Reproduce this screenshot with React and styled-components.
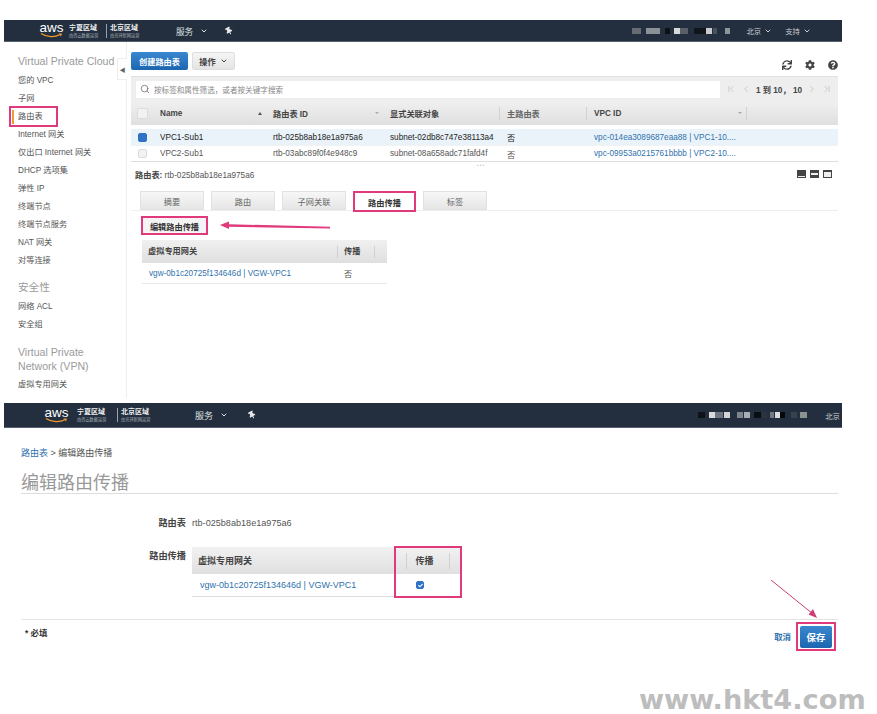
import React from "react"
import styled, { createGlobalStyle } from "styled-components"
import { FaSync, FaCog, FaQuestionCircle, FaThumbtack, FaCheck } from "react-icons/fa"
import {
  Search,
  ChevronDown,
  ChevronFirst,
  ChevronLast,
  ChevronLeft,
  ChevronRight,
} from "lucide-react"

const PINK = "#e0397c"
const LINK = "#2f72ad"

const GlobalStyle = createGlobalStyle`
  html, body {
    margin: 0;
    padding: 0;
    background: #fff;
  }
  body {
    font-family: "Liberation Sans", "Noto Sans CJK SC", sans-serif;
    color: #444;
  }
`

const Page = styled.div`
  position: relative;
  width: 877px;
  height: 714px;
  overflow: hidden;
  padding: 20px 35px 0 4px;
  box-sizing: border-box;
`

const Nav = styled.header`
  display: flex;
  align-items: center;
  height: ${p => p.$height}px;
  padding-left: ${p => p.$left}px;
  background: #232f3e;
  color: #e6e8ea;
  box-sizing: border-box;
  border-bottom: 1px solid #56616d;
`

const Logo = styled.div`
  display: flex;
  flex-direction: column;
  align-items: center;
  width: 23px;
  margin-right: ${p => p.$gap}px;
`

const LogoText = styled.span`
  font-size: 13.5px;
  line-height: 10px;
  color: #fff;
`

const Region = styled.div`
  display: flex;
  flex-direction: column;
  gap: 1px;
  width: ${p => p.$width}px;
  padding-left: ${p => (p.$divided ? 3 : 0)}px;
  border-left: ${p => (p.$divided ? "1px solid #9aa2aa" : "none")};
`

const RegionName = styled.span`
  font-size: 7px;
  line-height: 8px;
  font-weight: bold;
  color: #f2f2f2;
`

const RegionNote = styled.span`
  font-size: 4.2px;
  line-height: 5px;
  color: #aab0b6;
  white-space: nowrap;
`

const Services = styled.span`
  display: flex;
  align-items: center;
  gap: 7px;
  margin-left: ${p => p.$gap}px;
  font-size: ${p => p.$size}px;
  color: #dfe1e3;
`

const Pin = styled(FaThumbtack)`
  margin-left: ${p => p.$gap}px;
  color: #e8e8e8;
  font-size: 8px;
  transform: rotate(-30deg);
`

const NavRight = styled.div`
  display: flex;
  align-items: center;
  margin-left: auto;
  margin-right: ${p => p.$right}px;
  font-size: 7.4px;
  color: #c9cdd1;
`

const Mosaic = styled.svg`
  display: block;
  margin-right: ${p => p.$gap}px;
`

const NavMenu = styled.span`
  display: flex;
  align-items: center;
  gap: 3px;
  margin-left: ${p => p.$gap || 0}px;
`

const Body = styled.div`
  display: flex;
  height: 356px;
`

const Sidebar = styled.nav`
  width: 123px;
  flex: none;
  padding: 10px 0 0 14px;
  box-sizing: border-box;
  border-right: 1px solid #eee;
`

const SideTitle = styled.div`
  font-size: 10.6px;
  line-height: ${p => p.$line || 18}px;
  color: #9a9a9a;
  white-space: nowrap;
  margin-top: ${p => p.$top || 0}px;
  margin-bottom: ${p => p.$bottom || 0}px;
`

const SideItem = styled.div`
  position: relative;
  font-size: 8.2px;
  line-height: 18px;
  color: #555;
  white-space: nowrap;

  ${p =>
    p.$active &&
    `
    &::before {
      content: "";
      position: absolute;
      left: -6px;
      top: 2px;
      width: 2px;
      height: 14px;
      background: #f19a38;
    }
    &::after {
      content: "";
      position: absolute;
      left: -9px;
      top: -2px;
      width: 49px;
      height: 21px;
      border: 2px solid ${PINK};
      box-sizing: border-box;
    }
  `}
`

const Main = styled.main`
  position: relative;
  flex: 1;
  min-width: 0;
  padding: 10px 4px 0;
`

const CollapseTab = styled.div`
  position: absolute;
  left: -10px;
  top: 16px;
  width: 10px;
  height: 22px;
  display: flex;
  align-items: center;
  justify-content: center;
  background: #fff;
  border: 1px solid #eee;
  border-right: none;
  box-sizing: border-box;
  color: #666;
  font-size: 6px;
`

const Toolbar = styled.div`
  display: flex;
  align-items: center;
  gap: 4px;
  height: 18px;
`

const PrimaryButton = styled.button`
  height: ${p => p.$height || 18}px;
  width: ${p => p.$width}px;
  padding: 0;
  border: none;
  border-radius: 2px;
  background: linear-gradient(#3a87cf, #1c66b0);
  color: #fff;
  font: bold ${p => p.$font || 8.2}px "Liberation Sans", "Noto Sans CJK SC", sans-serif;
`

const GrayButton = styled.button`
  display: flex;
  align-items: center;
  justify-content: center;
  gap: 4px;
  width: 43px;
  height: 18px;
  padding: 0;
  border: 1px solid #ddd;
  border-radius: 2px;
  background: linear-gradient(#f5f5f5, #e4e4e4);
  color: #444;
  font: bold 8.2px "Liberation Sans", "Noto Sans CJK SC", sans-serif;
`

const ToolIcons = styled.div`
  display: flex;
  align-items: center;
  gap: 13px;
  margin-left: auto;
  padding-top: 8px;
  color: #444;
  font-size: 10px;
`

const FilterBar = styled.div`
  display: flex;
  align-items: center;
  height: 25px;
  margin-top: 6px;
  padding: 0 0 0 5px;
  background: #eee;
  border-top: 1px solid #e2e2e2;
  box-sizing: border-box;
`

const FilterInput = styled.div`
  display: flex;
  align-items: center;
  gap: 4px;
  width: 584px;
  height: 17px;
  padding-left: 4px;
  box-sizing: border-box;
  background: #fff;
  color: #888;
  font-size: 7.6px;
`

const Pager = styled.div`
  display: flex;
  align-items: center;
  justify-content: center;
  gap: 5px;
  flex: 1;
  color: #444;
  font-size: 8.2px;
  font-weight: bold;
  white-space: nowrap;

  svg {
    color: #c4c4c4;
  }
`

const GRID = "22px 113px 117px 117px 87px 160px 1fr"

const TableHead = styled.div`
  display: grid;
  grid-template-columns: ${GRID};
  align-items: center;
  height: 24px;
  background: linear-gradient(#f0f0f0, #dfdfdf);
  font-size: 8.2px;
  color: #444;
  font-weight: bold;
`

const HeadCell = styled.div`
  display: flex;
  align-items: center;
  justify-content: space-between;
  height: 13px;
  padding: 0 4px 0 7px;
  border-right: ${p => (p.$sep ? "1px solid #d2d2d2" : "none")};
  color: ${p => (p.$soft ? "#666" : "#444")};
  white-space: nowrap;
`

const SortMark = styled.span`
  width: 0;
  height: 0;
  border-left: 2px solid transparent;
  border-right: 2px solid transparent;
  border-bottom: ${p => (p.$on ? "3px solid #555" : "none")};
  border-top: ${p => (p.$on ? "none" : "2px solid #aaa")};
`

const TableRow = styled.div`
  display: grid;
  grid-template-columns: ${GRID};
  align-items: center;
  height: ${p => (p.$selected ? 17 : 16)}px;
  margin-top: ${p => (p.$selected ? 4 : 0)}px;
  background: ${p => (p.$selected ? "#ebf3fa" : "#fff")};
  border-bottom: 1px solid ${p => (p.$selected ? "#f2f2f2" : "#ddd")};
  box-sizing: border-box;
  font-size: 8.2px;
  color: ${p => (p.$selected ? "#222" : "#555")};
`

const Cell = styled.div`
  padding-left: 7px;
  white-space: nowrap;
  overflow: hidden;
`

const LinkText = styled.span`
  color: ${LINK};
  font-size: ${p => p.$size || 8.2}px;
  white-space: nowrap;
`

const CheckCell = styled.div`
  display: flex;
  justify-content: center;
`

const Check = styled.span`
  display: flex;
  align-items: center;
  justify-content: center;
  width: ${p => p.$size || 9}px;
  height: ${p => p.$size || 9}px;
  border-radius: 2px;
  box-sizing: border-box;
  background: ${p => (p.$on ? "#2f72c6" : "#f2f2f2")};
  border: 1px solid ${p => (p.$on ? "#2f72c6" : "#dcdcdc")};
  color: #fff;
  font-size: 5px;
`

const DetailBar = styled.div`
  position: relative;
  display: flex;
  align-items: center;
  justify-content: space-between;
  height: 24px;
  padding: 0 6px 0 4px;
  font-size: 8.2px;
  color: #555;

  b {
    color: #444;
  }
`

const DragDots = styled.span`
  position: absolute;
  left: 346px;
  top: 1px;
  font-size: 5px;
  line-height: 5px;
  letter-spacing: 1px;
  color: #ccc;
`

const LayoutIcons = styled.div`
  display: flex;
  gap: 4px;
`

const Tabs = styled.div`
  display: flex;
  gap: 7px;
  height: 19px;
  margin-top: 5px;
  padding-left: 9px;
  border-bottom: 1px solid #eee;
`

const Tab = styled.div`
  display: flex;
  align-items: center;
  justify-content: center;
  width: ${p => (p.$active ? 63 : 64)}px;
  height: ${p => (p.$active ? 21 : 19)}px;
  box-sizing: border-box;
  border: ${p => (p.$active ? `2px solid ${PINK}` : "1px solid #e2e2e2")};
  background: ${p => (p.$active ? "#fff" : "linear-gradient(#f7f7f7, #e6e6e6)")};
  font-size: 8.2px;
  font-weight: ${p => (p.$active ? "bold" : "normal")};
  color: ${p => (p.$active ? "#333" : "#666")};
`

const Pane = styled.div`
  position: relative;
  padding: 5px 0 0 10px;
`

const EditButton = styled.div`
  display: flex;
  align-items: center;
  justify-content: center;
  width: 67px;
  height: 19px;
  margin-bottom: 5px;
  box-sizing: border-box;
  border: 2px solid ${PINK};
  background: #f4f4f4;
  color: #333;
  font-size: 8.2px;
  font-weight: bold;
`

const Annotation = styled.svg`
  position: absolute;
  left: ${p => p.$x}px;
  top: ${p => p.$y}px;
  pointer-events: none;
`

const SubTable = styled.div`
  width: 245px;
  margin-left: 1px;
`

const SUB_GRID = "196px 37px 12px"

const SubHead = styled.div`
  display: grid;
  grid-template-columns: ${SUB_GRID};
  align-items: center;
  height: 23px;
  background: linear-gradient(#f0f0f0, #dfdfdf);
  font-size: 8.2px;
  font-weight: bold;
  color: #444;
`

const SubHeadCell = styled.div`
  height: 12px;
  line-height: 12px;
  padding-left: 6px;
  border-right: ${p => (p.$sep ? "1px solid #d0d0d0" : "none")};
`

const SubRow = styled.div`
  display: grid;
  grid-template-columns: ${SUB_GRID};
  align-items: center;
  height: 21px;
  box-sizing: border-box;
  border-bottom: 1px solid #e8e8e8;
  font-size: 8.2px;
  color: #555;
`

const SubCell = styled.div`
  padding-left: ${p => p.$left}px;
  white-space: nowrap;
`

const Shot = styled.section`
  position: relative;
  margin-top: 5px;
`

const Content = styled.div`
  padding: 17px 0 0 17px;
  margin-right: 4px;
`

const Crumbs = styled.div`
  font-size: 9px;
  line-height: 16px;
  color: #555;
`

const CrumbLink = styled.span`
  color: ${LINK};
`

const PageTitle = styled.h1`
  margin: 8px 0 0;
  height: 25px;
  font-size: 18px;
  line-height: 28px;
  font-weight: normal;
  color: #999;
  border-bottom: 1px solid #ddd;
  box-sizing: border-box;
`

const FormRow = styled.div`
  display: flex;
  align-items: ${p => p.$align || "center"};
  gap: 6px;
  height: ${p => p.$height}px;
  margin-top: ${p => p.$top}px;
  font-size: 9.1px;
  line-height: 12px;
  color: #555;
`

const FormLabel = styled.div`
  width: 165px;
  flex: none;
  text-align: right;
  font-weight: bold;
  color: #444;
  font-size: 9.2px;
  padding-top: ${p => p.$pad || 0}px;
`

const PropTable = styled.div`
  display: flex;
  width: 270px;
`

const GatewayCol = styled.div`
  width: 202px;
  flex: none;
  margin-top: 1px;
`

const FramedCol = styled.div`
  width: 68px;
  flex: none;
  box-sizing: border-box;
  border: 2px solid ${PINK};
`

const PropHead = styled.div`
  display: flex;
  align-items: center;
  justify-content: ${p => (p.$center ? "center" : "flex-start")};
  height: ${p => p.$height}px;
  padding-left: ${p => (p.$center ? 0 : 6)}px;
  background: linear-gradient(#f1f1f1, #e0e0e0);
  font-weight: bold;
  color: #444;
  font-size: 9px;
`

const HeadLabel = styled.span`
  padding: 2px 15px 2px 8px;
  border-left: 1px solid #d0d0d0;
  border-right: 1px solid #d0d0d0;
`

const GatewayCell = styled.div`
  display: flex;
  align-items: center;
  height: 23px;
  padding-left: 8px;
  box-sizing: border-box;
  border-bottom: 1px solid #ddd;
`

const ToggleCell = styled.div`
  display: flex;
  align-items: center;
  height: 22px;
  padding-left: 20px;
  box-sizing: border-box;
`

const FormFooter = styled.div`
  display: flex;
  align-items: flex-start;
  height: 40px;
  margin-top: 21px;
  padding: 0 2px 0 4px;
  border-top: 1px solid #e4e4e4;
`

const Required = styled.span`
  margin-top: 7px;
  font-size: 8.4px;
  line-height: 12px;
  font-weight: bold;
  color: #333;
`

const Cancel = styled.span`
  margin: 11px 5px 0 auto;
  font-size: 8.4px;
  line-height: 12px;
  font-weight: bold;
  color: ${LINK};
`

const SaveFrame = styled.div`
  display: flex;
  align-items: center;
  justify-content: center;
  width: 40px;
  height: 29px;
  margin-top: 2px;
  box-sizing: border-box;
  border: 2px solid ${PINK};
  background: #fff;
`

const Watermark = styled.div`
  position: absolute;
  left: 639px;
  top: 686px;
  font: bold 27.2px/28px "DejaVu Sans", sans-serif;
  color: #bdbdbd;
  white-space: nowrap;
`

const MOSAIC_TOP = [
  [0, 9, "#676c72"],
  [14, 14, "#8c9197"],
  [33, 5, "#0d1116"],
  [42, 6, "#d8d8d8"],
  [48, 8, "#59606a"],
  [62, 12, "#10151b"],
  [74, 6, "#c8cacc"],
  [81, 4, "#49525c"],
  [93, 5, "#8b939b"],
]

const MOSAIC_BOTTOM = [
  [0, 7, "#0e1318"],
  [11, 6, "#d9dadc"],
  [17, 8, "#6f7680"],
  [26, 6, "#d4d5d8"],
  [39, 6, "#7d848c"],
  [46, 6, "#a8adb3"],
  [56, 7, "#0a0e12"],
  [64, 5, "#2a3440"],
  [72, 4, "#727982"],
  [77, 5, "#dcdde0"],
  [82, 5, "#050709"],
  [93, 6, "#37424e"],
  [102, 7, "#8b938f"],
]

const Redacted = ({ blocks, width, gap }) => (
  <Mosaic width={width} height="8" viewBox={`0 0 ${width} 8`} $gap={gap}>
    {blocks.map(([x, w, fill]) => (
      <rect key={x} x={x} y="1" width={w} height="6" fill={fill} />
    ))}
  </Mosaic>
)

const AwsBrand = ({ logoGap, firstWidth, secondWidth }) => (
  <>
    <Logo $gap={logoGap}>
      <LogoText>aws</LogoText>
      <svg width="23" height="5" viewBox="0 0 23 5">
        <path d="M1 0.5C7 4.5 15 4.5 20 1.5" fill="none" stroke="#f29b2e" strokeWidth="1.2" />
        <path d="M18.5 0.6L22 0.6L21 3.4Z" fill="#f29b2e" />
      </svg>
    </Logo>
    <Region $width={firstWidth}>
      <RegionName>宁夏区域</RegionName>
      <RegionNote>由西云数据运营</RegionNote>
    </Region>
    <Region $width={secondWidth} $divided>
      <RegionName>北京区域</RegionName>
      <RegionNote>由光环新网运营</RegionNote>
    </Region>
  </>
)

const Caret = () => <ChevronDown size={8} strokeWidth={3} />

const ResizeIcon = ({ band }) => (
  <svg width="9" height="8" viewBox="0 0 9 8">
    <rect width="9" height="8" fill="#444" />
    <rect x="1" y={band[0]} width="7" height={band[1]} fill="#eee" />
  </svg>
)

const RTB = "rtb-025b8ab18e1a975a6"
const VGW = "vgw-0b1c20725f134646d | VGW-VPC1"

const tabs = ["摘要", "路由", "子网关联", "路由传播", "标签"]

const topItems = [
  "您的 VPC",
  "子网",
  "路由表",
  "Internet 网关",
  "仅出口 Internet 网关",
  "DHCP 选项集",
  "弹性 IP",
  "终端节点",
  "终端节点服务",
  "NAT 网关",
  "对等连接",
]

const App = () => (
  <Page>
    <GlobalStyle />

    <Nav $height={22} $left={36}>
      <AwsBrand logoGap={6} firstWidth={37} secondWidth={36} />
      <Services $gap={30} $size={8.6}>
        服务 <Caret />
      </Services>
      <Pin $gap={17} />
      <NavRight $right={31}>
        <Redacted blocks={MOSAIC_TOP} width={98} gap={16} />
        <NavMenu>
          北京 <Caret />
        </NavMenu>
        <NavMenu $gap={13}>
          支持 <Caret />
        </NavMenu>
      </NavRight>
    </Nav>

    <Body>
      <Sidebar>
        <SideTitle $bottom={2}>Virtual Private Cloud</SideTitle>
        {topItems.map(item => (
          <SideItem key={item} $active={item === "路由表"}>
            {item}
          </SideItem>
        ))}
        <SideTitle $top={8} $bottom={2}>
          安全性
        </SideTitle>
        <SideItem>网络 ACL</SideItem>
        <SideItem>安全组</SideItem>
        <SideTitle $top={11} $bottom={3} $line={14}>
          Virtual Private
          <br />
          Network (VPN)
        </SideTitle>
        <SideItem>虚拟专用网关</SideItem>
      </Sidebar>

      <Main>
        <CollapseTab>◀</CollapseTab>
        <Toolbar>
          <PrimaryButton $width={57}>创建路由表</PrimaryButton>
          <GrayButton>
            操作 <Caret />
          </GrayButton>
          <ToolIcons>
            <FaSync />
            <FaCog />
            <FaQuestionCircle />
          </ToolIcons>
        </Toolbar>

        <FilterBar>
          <FilterInput>
            <Search size={10} color="#777" />
            按标签和属性筛选，或者按关键字搜索
          </FilterInput>
          <Pager>
            <ChevronFirst size={10} />
            <ChevronLeft size={10} />
            1 到 10， 10
            <ChevronRight size={10} />
            <ChevronLast size={10} />
          </Pager>
        </FilterBar>

        <TableHead>
          <CheckCell>
            <Check $size={11} />
          </CheckCell>
          <HeadCell>
            Name <SortMark $on />
          </HeadCell>
          <HeadCell>
            路由表 ID <SortMark />
          </HeadCell>
          <HeadCell $sep>显式关联对象</HeadCell>
          <HeadCell $sep $soft>
            主路由表
          </HeadCell>
          <HeadCell $sep>
            VPC ID <SortMark />
          </HeadCell>
        </TableHead>
        <TableRow $selected>
          <CheckCell>
            <Check $on />
          </CheckCell>
          <Cell>VPC1-Sub1</Cell>
          <Cell>{RTB}</Cell>
          <Cell>subnet-02db8c747e38113a4</Cell>
          <Cell>否</Cell>
          <Cell>
            <LinkText>vpc-014ea3089687eaa88 | VPC1-10....</LinkText>
          </Cell>
        </TableRow>
        <TableRow>
          <CheckCell>
            <Check />
          </CheckCell>
          <Cell>VPC2-Sub1</Cell>
          <Cell>rtb-03abc89f0f4e948c9</Cell>
          <Cell>subnet-08a658adc71fafd4f</Cell>
          <Cell>否</Cell>
          <Cell>
            <LinkText>vpc-09953a0215761bbbb | VPC2-10....</LinkText>
          </Cell>
        </TableRow>

        <DetailBar>
          <DragDots>•••</DragDots>
          <span>
            <b>路由表:</b> {RTB}
          </span>
          <LayoutIcons>
            <ResizeIcon band={[6, 1]} />
            <ResizeIcon band={[3, 2]} />
            <ResizeIcon band={[2, 5]} />
          </LayoutIcons>
        </DetailBar>

        <Tabs>
          {tabs.map(tab => (
            <Tab key={tab} $active={tab === "路由传播"}>
              {tab}
            </Tab>
          ))}
        </Tabs>

        <Pane>
          <Annotation $x={89} $y={10} width="112" height="10" viewBox="0 0 112 10">
            <path d="M0 4L9 0.5L9 3.2L110 5.8L110 7.4L9 5.8L9 8Z" fill={PINK} />
          </Annotation>
          <EditButton>编辑路由传播</EditButton>
          <SubTable>
            <SubHead>
              <SubHeadCell $sep>虚拟专用网关</SubHeadCell>
              <SubHeadCell $sep>传播</SubHeadCell>
            </SubHead>
            <SubRow>
              <SubCell $left={7}>
                <LinkText>{VGW}</LinkText>
              </SubCell>
              <SubCell $left={6}>否</SubCell>
            </SubRow>
          </SubTable>
        </Pane>
      </Main>
    </Body>

    <Shot>
      <Nav $height={25} $left={41}>
        <AwsBrand logoGap={9} firstWidth={40} secondWidth={40} />
        <Services $gap={34} $size={9}>
          服务 <Caret />
        </Services>
        <Pin $gap={20} />
        <NavRight $right={2}>
          <Redacted blocks={MOSAIC_BOTTOM} width={110} gap={17} />
          北京
        </NavRight>
      </Nav>

      <Annotation $x={766} $y={177} width="50" height="42" viewBox="0 0 50 42">
        <path d="M1 0L43 34" stroke="#cf3c74" strokeWidth="1" fill="none" />
        <path d="M47 38L38.5 34.5L43 29Z" fill="#cf3c74" />
      </Annotation>

      <Content>
        <Crumbs>
          <CrumbLink>路由表</CrumbLink> &gt; 编辑路由传播
        </Crumbs>
        <PageTitle>编辑路由传播</PageTitle>

        <FormRow $top={23} $height={12}>
          <FormLabel>路由表</FormLabel>
          {RTB}
        </FormRow>

        <FormRow $top={17} $height={52} $align="flex-start">
          <FormLabel $pad={4}>路由传播</FormLabel>
          <PropTable>
            <GatewayCol>
              <PropHead $height={27}>虚拟专用网关</PropHead>
              <GatewayCell>
                <LinkText $size={9}>{VGW}</LinkText>
              </GatewayCell>
            </GatewayCol>
            <FramedCol>
              <PropHead $center $height={26}>
                <HeadLabel>传播</HeadLabel>
              </PropHead>
              <ToggleCell>
                <Check $on $size={8}>
                  <FaCheck />
                </Check>
              </ToggleCell>
            </FramedCol>
          </PropTable>
        </FormRow>

        <FormFooter>
          <Required>* 必填</Required>
          <Cancel>取消</Cancel>
          <SaveFrame>
            <PrimaryButton $width={32} $height={22} $font={9.4}>
              保存
            </PrimaryButton>
          </SaveFrame>
        </FormFooter>
      </Content>
    </Shot>

    <Watermark>www.hkt4.com</Watermark>
  </Page>
)

export default App
